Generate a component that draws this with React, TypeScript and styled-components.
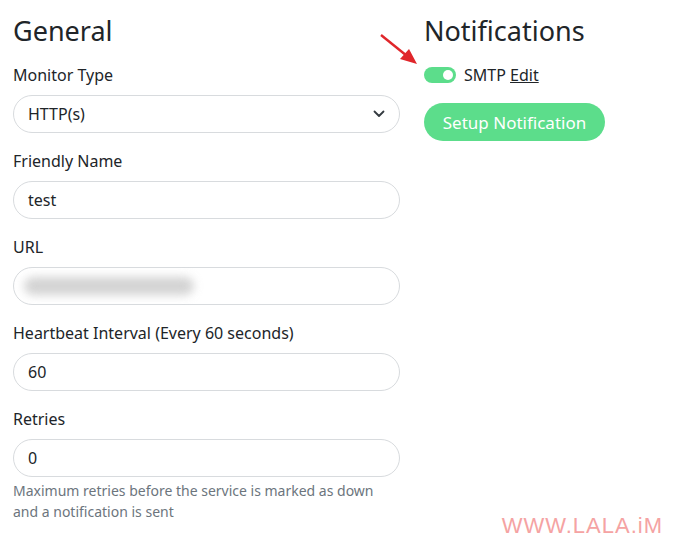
import styled, { createGlobalStyle } from "styled-components";

const Global = createGlobalStyle`
  html, body {
    margin: 0;
    background: #fff;
  }
  body {
    font-family: "Noto Sans", "Open Sans", sans-serif;
    color: #212529;
  }
`;

const Page = styled.div`
  position: relative;
  width: 675px;
  height: 543px;
  overflow: hidden;
  display: flex;
  gap: 24px;
  padding: 14px 0 0 13px;
  box-sizing: border-box;
`;

const Column = styled.div<{ $width: number }>`
  width: ${(p) => p.$width}px;
  display: flex;
  flex-direction: column;
`;

const Heading = styled.h2`
  margin: 0 0 15px;
  font-size: 27px;
  font-weight: 400;
  line-height: 34px;
  color: #212529;
`;

const Field = styled.div`
  display: flex;
  flex-direction: column;
  margin-bottom: 16px;
`;

const Label = styled.label`
  font-size: 16px;
  line-height: 24px;
  margin-bottom: 8px;
`;

const Input = styled.div`
  position: relative;
  height: 38px;
  box-sizing: border-box;
  border: 1px solid #d8dbde;
  border-radius: 19px;
  padding: 0 14px;
  display: flex;
  align-items: center;
  justify-content: space-between;
  font-size: 16px;
`;

const Blur = styled.div`
  width: 170px;
  height: 18px;
  margin-left: -4px;
  background: #c8c8c8;
  border-radius: 9px;
  filter: blur(5px);
  opacity: 0.8;
`;

const Help = styled.div`
  margin-top: 3px;
  font-size: 14px;
  line-height: 21px;
  color: #6c757d;
`;

const NotifyRow = styled.div`
  display: flex;
  align-items: center;
  gap: 8px;
  font-size: 16px;
  line-height: 24px;
  margin-bottom: 16px;
`;

const Toggle = styled.span`
  width: 32px;
  height: 16px;
  border-radius: 8px;
  background: #5cdd8b;
  position: relative;
  &::after {
    content: "";
    position: absolute;
    right: 3px;
    top: 3px;
    width: 10px;
    height: 10px;
    border-radius: 50%;
    background: #fff;
  }
`;

const EditLink = styled.a`
  color: #212529;
  text-decoration: underline;
`;

const Button = styled.button`
  width: 181px;
  height: 38px;
  border: none;
  border-radius: 19px;
  background: #5cdd8b;
  color: #fff;
  font-family: inherit;
  font-size: 17px;
  padding: 0;
`;

const Watermark = styled.div`
  position: absolute;
  right: 12px;
  bottom: 5px;
  font-family: "Liberation Sans", Arial, sans-serif;
  font-size: 22px;
  line-height: 25px;
  letter-spacing: 1px;
  color: #f5a3a3;
`;

const Arrow = styled.svg`
  position: absolute;
  left: 378px;
  top: 32px;
`;

const Chevron = () => (
  <svg width="12" height="8" viewBox="0 0 12 8">
    <path d="M1.5 1.5 L6 6 L10.5 1.5" fill="none" stroke="#343a40" strokeWidth="1.8" strokeLinecap="round" strokeLinejoin="round" />
  </svg>
);

export default function App() {
  return (
    <>
      <Global />
      <Page>
        <Column $width={387}>
          <Heading>General</Heading>
          <Field>
            <Label>Monitor Type</Label>
            <Input>
              HTTP(s)
              <Chevron />
            </Input>
          </Field>
          <Field>
            <Label>Friendly Name</Label>
            <Input>test</Input>
          </Field>
          <Field>
            <Label>URL</Label>
            <Input>
              <Blur />
            </Input>
          </Field>
          <Field>
            <Label>Heartbeat Interval (Every 60 seconds)</Label>
            <Input>60</Input>
          </Field>
          <Field>
            <Label>Retries</Label>
            <Input>0</Input>
            <Help>
              Maximum retries before the service is marked as down
              <br />
              and a notification is sent
            </Help>
          </Field>
        </Column>
        <Column $width={220}>
          <Heading>Notifications</Heading>
          <NotifyRow>
            <Toggle />
            <span>
              SMTP <EditLink>Edit</EditLink>
            </span>
          </NotifyRow>
          <Button>Setup Notification</Button>
        </Column>
        <Arrow width="44" height="38" viewBox="0 0 44 38">
          <line x1="3" y1="3" x2="29" y2="24" stroke="#e0262b" strokeWidth="2.4" />
          <polygon points="39,32 22,27 31,17" fill="#e0262b" />
        </Arrow>
        <Watermark>WWW.LALA.iM</Watermark>
      </Page>
    </>
  );
}
